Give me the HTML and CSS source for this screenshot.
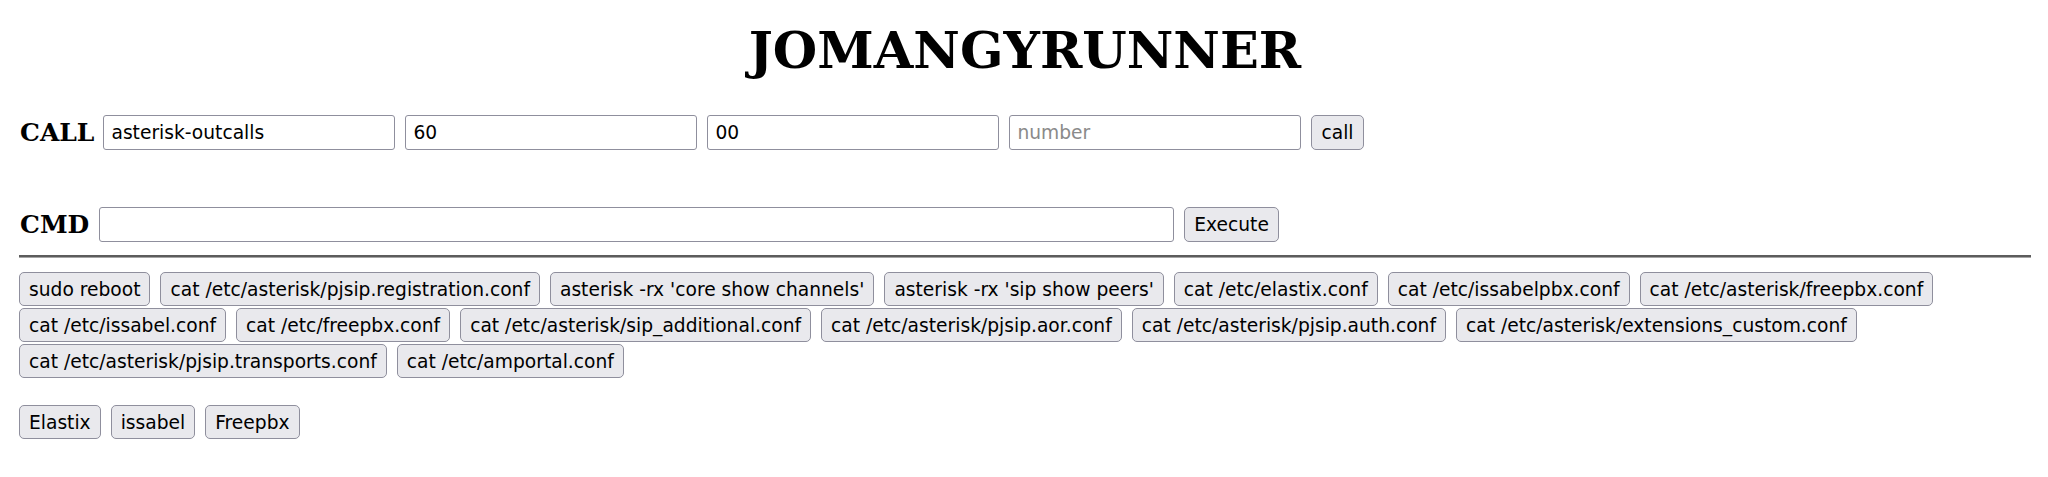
FILE: index.html
```html
<!DOCTYPE html>
<html lang="en">
<head>
<meta charset="utf-8">
<title>JOMANGYRUNNER</title>
<link rel="stylesheet" href="styles.css">
</head>
<body>
<div class="page">
  <h1 class="title">JOMANGYRUNNER</h1>

  <div class="row row-call">
    <span class="label">CALL</span>
    <input class="field field-call" type="text" value="asterisk-outcalls">
    <input class="field field-call" type="text" value="60">
    <input class="field field-call" type="text" value="00">
    <input class="field field-call" type="text" placeholder="number">
    <button class="btn">call</button>
  </div>

  <div class="row row-cmd">
    <span class="label">CMD</span>
    <input class="field field-cmd" type="text">
    <button class="btn">Execute</button>
  </div>

  <hr class="divider">

  <div class="btn-group">
    <button class="btn">sudo reboot</button>
    <button class="btn">cat /etc/asterisk/pjsip.registration.conf</button>
    <button class="btn">asterisk -rx 'core show channels'</button>
    <button class="btn">asterisk -rx 'sip show peers'</button>
    <button class="btn">cat /etc/elastix.conf</button>
    <button class="btn">cat /etc/issabelpbx.conf</button>
    <button class="btn">cat /etc/asterisk/freepbx.conf</button>
    <button class="btn">cat /etc/issabel.conf</button>
    <button class="btn">cat /etc/freepbx.conf</button>
    <button class="btn">cat /etc/asterisk/sip_additional.conf</button>
    <button class="btn">cat /etc/asterisk/pjsip.aor.conf</button>
    <button class="btn">cat /etc/asterisk/pjsip.auth.conf</button>
    <button class="btn">cat /etc/asterisk/extensions_custom.conf</button>
    <button class="btn">cat /etc/asterisk/pjsip.transports.conf</button>
    <button class="btn">cat /etc/amportal.conf</button>
  </div>

  <div class="btn-group btn-group-systems">
    <button class="btn">Elastix</button>
    <button class="btn">issabel</button>
    <button class="btn">Freepbx</button>
  </div>
</div>
</body>
</html>
```

FILE: styles.css
```css
html, body {
  margin: 0;
  padding: 0;
  background: #ffffff;
}

.page {
  padding: 0 17px 0 19px;
  font-family: "DejaVu Sans", sans-serif;
  color: #000;
}

.title {
  margin: 21px 0 0;
  font-family: "DejaVu Serif", serif;
  font-weight: bold;
  font-size: 51px;
  line-height: 59px;
  text-align: center;
}

.row {
  display: flex;
  align-items: center;
  gap: 10px;
}

.row-call {
  margin-top: 35px;
}

.row-cmd {
  margin-top: 57px;
}

.label {
  font-family: "DejaVu Serif", serif;
  font-weight: bold;
  font-size: 25px;
  line-height: 30px;
  margin-left: 1px;
}

.field {
  box-sizing: border-box;
  height: 35px;
  margin: 0;
  padding: 0 7px;
  border: 1px solid #8f8f9d;
  border-radius: 3px;
  background: #fff;
  font-family: "DejaVu Sans", sans-serif;
  font-size: 18.67px;
  color: #000;
  outline: none;
}

.field::placeholder {
  color: #8a8a8a;
}

.field-call {
  width: 292px;
}

.row-call .field-call:first-of-type {
  margin-left: -1px;
}

.field-cmd {
  width: 1075px;
}

.btn {
  box-sizing: border-box;
  height: 34px;
  margin: 0;
  padding: 0 9px;
  border: 1px solid #8f8f9d;
  border-radius: 5px;
  background: #e9e9ed;
  font-family: "DejaVu Sans", sans-serif;
  font-size: 18.67px;
  color: #000;
  white-space: nowrap;
}

.row .btn {
  height: 35px;
}

.divider {
  margin: 13px 0 0;
  height: 0;
  border: 0;
  border-top: 2px solid #5c5c5c;
  border-bottom: 1px solid #a5a5a5;
}

.btn-group {
  display: flex;
  flex-wrap: wrap;
  gap: 2px 10px;
  margin-top: 14px;
}

.btn-group-systems {
  margin-top: 27px;
}
```
